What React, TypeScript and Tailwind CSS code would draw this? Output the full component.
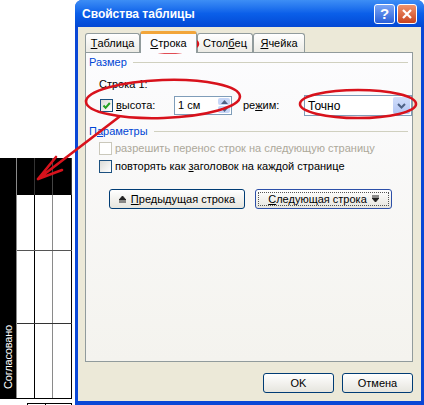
import React from "react";

const font = "font-['Liberation_Sans',Arial,sans-serif]";

function Box({ checked = false, disabled = false }: { checked?: boolean; disabled?: boolean }) {
  return (
    <div
      className={
        disabled
          ? "w-[13px] h-[13px] border border-[#cac8bb] bg-white shrink-0"
          : "w-[13px] h-[13px] border border-[#1c5180] bg-linear-to-br from-[#dcdcd7] to-white shrink-0 flex items-center justify-center"
      }
    >
      {checked && (
        <svg width="9" height="9" viewBox="0 0 9 9">
          <path d="M1.5 4.5 L3.6 6.8 L7.8 2" fill="none" stroke="#21a121" strokeWidth="2" />
        </svg>
      )}
    </div>
  );
}

function Tab({ u, rest, pre = "", active = false, w }: { u: string; rest: string; pre?: string; active?: boolean; w: string }) {
  return (
    <div
      className={
        active
          ? `${w} h-[22px] -mb-px relative z-10 bg-[#fcfcfe] border-x border-[#919b9c] rounded-t-[3px] border-t-[3px] border-t-[#f2a53a] flex items-center justify-center text-[11px]`
          : `${w} h-[19px] bg-linear-to-b from-white to-[#ecebe5] border-x border-t border-[#919b9c] rounded-t-[3px] flex items-center justify-center text-[11px]`
      }
    >
      {pre}
      <span className="underline underline-offset-1">{u}</span>
      {rest}
    </div>
  );
}

function XpButton({ children, focused = false, w }: { children: React.ReactNode; focused?: boolean; w: string }) {
  return (
    <div
      className={`${w} h-[20px] rounded-[3px] border ${focused ? "border-[#2c4fa8]" : "border-[#003c74]"} bg-linear-to-b from-white to-[#e6e5de] flex items-center justify-center text-[11px] text-black`}
    >
      {focused ? (
        <div className="m-[2px] flex-1 self-stretch border border-dotted border-[#555] flex items-center justify-center">{children}</div>
      ) : (
        children
      )}
    </div>
  );
}

function Cells({ dark = false }: { dark?: boolean }) {
  return (
    <>
      <div className={`w-[18px] border-r ${dark ? "border-[#333]" : "border-black"}`} />
      <div className={`w-[18px] border-r ${dark ? "border-[#444]" : "border-[#8a8a8a]"}`} />
      <div className={`w-[19px] border-r ${dark ? "border-[#333]" : "border-black"}`} />
    </>
  );
}

export default function App() {
  return (
    <div className={`relative w-[424px] h-[405px] overflow-hidden bg-white flex ${font}`}>
      {/* table fragment on the left */}
      <div className="w-[75px] shrink-0 pt-[158px]">
        <div className="flex w-[72px] h-[241px] border-b border-black">
          <div className="w-[16px] bg-black flex items-end justify-center pb-[9px]">
            <span className="[writing-mode:vertical-rl] rotate-180 text-white text-[11px] leading-none tracking-[-0.2px]">Согласовано</span>
          </div>
          <div className="flex-1 flex flex-col border-l border-[#8a8a8a]">
            <div className="h-[37px] bg-black flex">
              <Cells dark />
            </div>
            <div className="h-[56px] flex border-b border-[#555]">
              <Cells />
            </div>
            <div className="h-[73px] flex border-b border-[#333]">
              <Cells />
            </div>
            <div className="flex-1 flex">
              <Cells />
            </div>
          </div>
        </div>
        <div className="ml-[27px] mt-[4px] w-[45px] h-[10px] border-t border-l border-black flex">
          <div className="w-[18px] border-r border-black" />
          <div className="w-[26px] border-r border-black" />
        </div>
      </div>

      {/* dialog window */}
      <div className="w-[349px] h-[405px] shrink-0 flex flex-col rounded-t-[7px] overflow-hidden bg-[#0a47d6] pb-[4px] px-[3px]">
        <div className="h-[27px] -mx-[3px] px-[7px] bg-linear-to-b from-[#3d8ef5] via-[#0b5fe9] to-[#0448d4] flex items-center">
          <span className="text-white font-bold text-[12px] flex-1">Свойства таблицы</span>
          <div className="w-[21px] h-[20px] rounded-[3px] border border-white bg-linear-to-b from-[#7aa5f5] to-[#2a5fd8] flex items-center justify-center text-white font-bold text-[15px] leading-none">?</div>
          <div className="ml-[2px] w-[20px] h-[20px] rounded-[3px] border border-white bg-linear-to-b from-[#f0936c] to-[#c8421c] flex items-center justify-center">
            <svg width="12" height="12" viewBox="0 0 12 12">
              <path d="M2 2 L10 10 M10 2 L2 10" stroke="white" strokeWidth="2.2" />
            </svg>
          </div>
        </div>

        <div className="flex-1 bg-[#ece9d8] flex flex-col pl-[7px] pr-[8px]">
          {/* tabs */}
          <div className="h-[25px] flex items-end">
            <Tab w="w-[55px]" u="Т" rest="аблица" />
            <Tab w="w-[57px]" u="С" rest="трока" active />
            <Tab w="w-[56px]" pre="Стол" u="б" rest="ец" />
            <Tab w="w-[52px]" u="Я" rest="чейка" />
          </div>

          {/* panel */}
          <div className="h-[310px] border border-[#919b9c] bg-linear-to-b from-[#fcfcfe] to-[#f4f3ee] text-[11px] text-black pt-[3px]">
            <div className="h-[13px] flex items-center pl-[3px] pr-[4px]">
              <span className="text-[#0046d5]">Размер</span>
              <div className="flex-1 ml-[6px] h-px bg-[#d0d0bf]" />
            </div>
            <div className="h-[14px] mt-[8px] pl-[13px] flex items-center">Строка 1:</div>
            <div className="mt-[4px] h-[21px] pl-[14px] flex items-center">
              <Box checked />
              <span className="w-[61px] pl-[3px]">
                <span className="underline underline-offset-1">в</span>ысота:
              </span>
              <div className="w-[58px] h-[19px] border border-[#7f9db9] bg-white flex items-center">
                <span className="flex-1 pl-[3px]">1 см</span>
                <div className="w-[14px] h-full flex flex-col p-px gap-px">
                  <div className="flex-1 rounded-[2px] bg-[#c6d6f7] flex items-center justify-center">
                    <svg width="7" height="4" viewBox="0 0 7 4"><path d="M0 4 L3.5 0 L7 4 Z" fill="#4d6185" /></svg>
                  </div>
                  <div className="flex-1 rounded-[2px] bg-[#c6d6f7] flex items-center justify-center">
                    <svg width="7" height="4" viewBox="0 0 7 4"><path d="M0 0 L3.5 4 L7 0 Z" fill="#4d6185" /></svg>
                  </div>
                </div>
              </div>
              <span className="ml-[11px] w-[61px]">
                ре<span className="underline underline-offset-1">ж</span>им:
              </span>
              <div className="w-[108px] h-[21px] border border-[#7f9db9] bg-white flex items-center">
                <span className="flex-1 pl-[3px] text-[12px]">Точно</span>
                <div className="w-[17px] h-[17px] mr-px rounded-[2px] bg-linear-to-b from-[#d2defb] to-[#b2c6f4] flex items-center justify-center">
                  <svg width="9" height="6" viewBox="0 0 9 6"><path d="M1 1 L4.5 4.5 L8 1" fill="none" stroke="#4d6185" strokeWidth="2" /></svg>
                </div>
              </div>
            </div>
            <div className="mt-[9px] h-[13px] flex items-center pl-[3px] pr-[4px]">
              <span className="text-[#0046d5]">
                П<span className="underline underline-offset-1">а</span>раметры
              </span>
              <div className="flex-1 ml-[6px] h-px bg-[#d0d0bf]" />
            </div>
            <div className="mt-[4px] h-[13px] pl-[13px] flex items-center">
              <Box disabled />
              <span className="pl-[3px] text-[#aca899]">разрешить перенос строк на следующую страницу</span>
            </div>
            <div className="mt-[5px] h-[13px] pl-[13px] flex items-center">
              <Box />
              <span className="pl-[3px]">
                повторять как <span className="underline underline-offset-1">з</span>аголовок на каждой странице
              </span>
            </div>
            <div className="mt-[16px] pl-[23px] flex gap-[10px]">
              <XpButton w="w-[136px]">
                <svg width="7" height="8" viewBox="0 0 7 8" className="mr-[5px]"><path d="M0 5 L3.5 1 L7 5 Z M0 7 H7" fill="#222" stroke="#222" strokeWidth="1" /></svg>
                <span className="underline underline-offset-1">П</span>редыдущая строка
              </XpButton>
              <XpButton w="w-[137px]" focused>
                <span className="underline underline-offset-1">С</span>ледующая строка
                <svg width="7" height="8" viewBox="0 0 7 8" className="ml-[5px]"><path d="M0 1 H7 M0 3 L3.5 7 L7 3 Z" fill="#222" stroke="#222" strokeWidth="1" /></svg>
              </XpButton>
            </div>
          </div>

          <div className="mt-[11px] flex justify-end gap-[8px]">
            <XpButton w="w-[71px]">OK</XpButton>
            <XpButton w="w-[71px]">Отмена</XpButton>
          </div>
        </div>
      </div>

      {/* red annotations drawn over the screenshot */}
      <svg className="absolute inset-0 pointer-events-none" width="424" height="405" viewBox="0 0 424 405">
        <g fill="none" stroke="#d8121c" strokeWidth="2.6" strokeLinecap="round">
          <ellipse cx="170" cy="44" rx="28" ry="8.5" />
          <ellipse cx="163" cy="99" rx="77" ry="19" transform="rotate(-2 163 99)" />
          <ellipse cx="358" cy="104" rx="58" ry="14" />
          <path d="M119 117 L38 179 M38 179 L56 157 M38 179 L62 170" />
        </g>
      </svg>
    </div>
  );
}
